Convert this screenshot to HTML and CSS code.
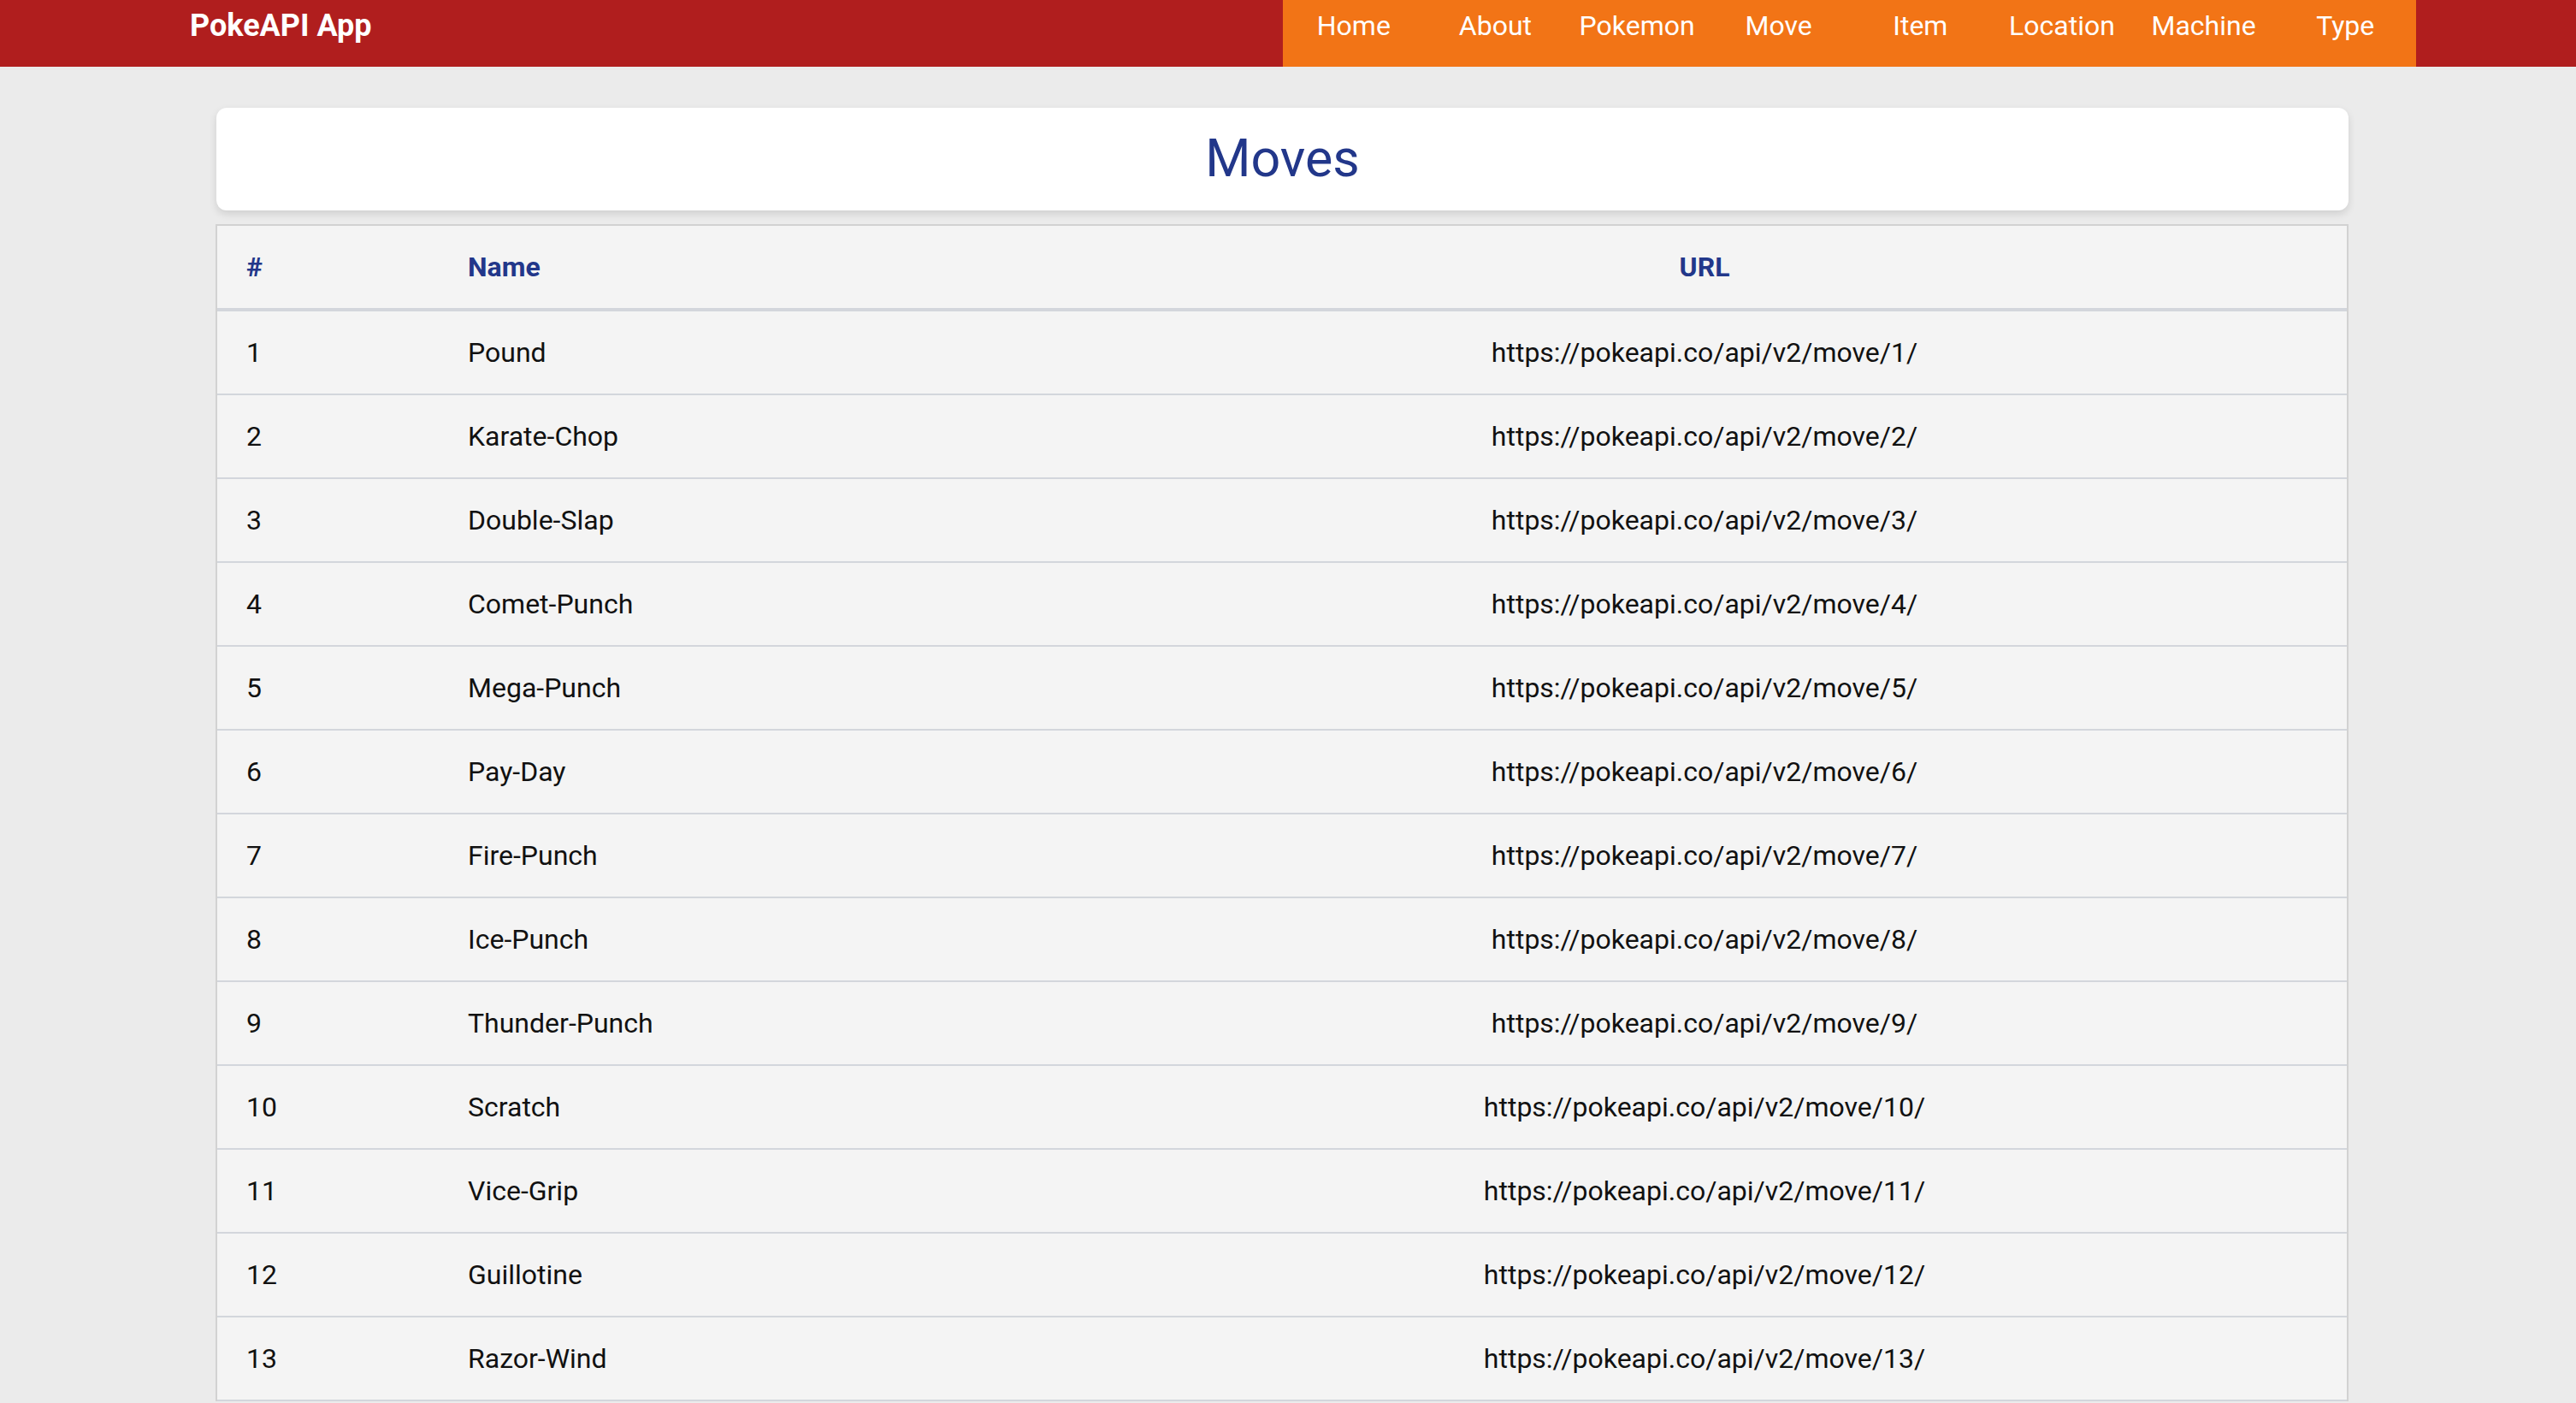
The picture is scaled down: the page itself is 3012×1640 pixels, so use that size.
FILE: index.html
```html
<!DOCTYPE html>
<html lang="en">
<head>
<meta charset="utf-8">
<title>PokeAPI App - Moves</title>
<link rel="stylesheet" href="styles.css">
</head>
<body>
<header class="topbar">
  <a class="brand" href="#">PokeAPI App</a>
  <nav class="nav">
    <a class="nav-link" href="#">Home</a>
    <a class="nav-link" href="#">About</a>
    <a class="nav-link" href="#">Pokemon</a>
    <a class="nav-link" href="#">Move</a>
    <a class="nav-link" href="#">Item</a>
    <a class="nav-link" href="#">Location</a>
    <a class="nav-link" href="#">Machine</a>
    <a class="nav-link" href="#">Type</a>
  </nav>
</header>
<main class="content">
  <section class="title-card">
    <h1 class="title">Moves</h1>
  </section>
  <table class="moves">
    <colgroup>
      <col class="col-num">
      <col class="col-name">
      <col class="col-url">
    </colgroup>
    <thead>
      <tr><th class="c-num">#</th><th class="c-name">Name</th><th class="c-url">URL</th></tr>
    </thead>
    <tbody>
      <tr><td>1</td><td>Pound</td><td class="c-url">https://pokeapi.co/api/v2/move/1/</td></tr>
      <tr><td>2</td><td>Karate-Chop</td><td class="c-url">https://pokeapi.co/api/v2/move/2/</td></tr>
      <tr><td>3</td><td>Double-Slap</td><td class="c-url">https://pokeapi.co/api/v2/move/3/</td></tr>
      <tr><td>4</td><td>Comet-Punch</td><td class="c-url">https://pokeapi.co/api/v2/move/4/</td></tr>
      <tr><td>5</td><td>Mega-Punch</td><td class="c-url">https://pokeapi.co/api/v2/move/5/</td></tr>
      <tr><td>6</td><td>Pay-Day</td><td class="c-url">https://pokeapi.co/api/v2/move/6/</td></tr>
      <tr><td>7</td><td>Fire-Punch</td><td class="c-url">https://pokeapi.co/api/v2/move/7/</td></tr>
      <tr><td>8</td><td>Ice-Punch</td><td class="c-url">https://pokeapi.co/api/v2/move/8/</td></tr>
      <tr><td>9</td><td>Thunder-Punch</td><td class="c-url">https://pokeapi.co/api/v2/move/9/</td></tr>
      <tr><td>10</td><td>Scratch</td><td class="c-url">https://pokeapi.co/api/v2/move/10/</td></tr>
      <tr><td>11</td><td>Vice-Grip</td><td class="c-url">https://pokeapi.co/api/v2/move/11/</td></tr>
      <tr><td>12</td><td>Guillotine</td><td class="c-url">https://pokeapi.co/api/v2/move/12/</td></tr>
      <tr><td>13</td><td>Razor-Wind</td><td class="c-url">https://pokeapi.co/api/v2/move/13/</td></tr>
    </tbody>
  </table>
</main>
</body>
</html>
```
FILE: styles.css
```css
html {
  scrollbar-width: none;
}
body {
  margin: 0;
  background: #ebebeb;
  font-family: Roboto, "Liberation Sans", sans-serif;
  color: #111;
}
.topbar {
  display: flex;
  align-items: stretch;
  height: 78px;
  background: #b01e1e;
  padding-left: 222px;
  padding-right: 187px;
}
.brand {
  flex: 1;
  padding-top: 9px;
  font-size: 36px;
  font-weight: 700;
  color: #fff;
  text-decoration: none;
}
.nav {
  display: grid;
  grid-template-columns: repeat(8, 1fr);
  width: 1325px;
  background: #f27416;
}
.nav-link {
  padding-top: 11px;
  text-align: center;
  font-size: 32px;
  color: #fff;
  text-decoration: none;
}
.content {
  width: 2494px;
  margin: 48px 0 0 252px;
  display: flex;
  flex-direction: column;
  gap: 16px;
}
.title-card {
  background: #fff;
  border-radius: 12px;
  box-shadow: 0 4px 10px rgba(0, 0, 0, 0.12);
  padding: 23px 0 25px;
  margin-left: 1px;
}
.title {
  margin: 0;
  text-align: center;
  font-size: 61px;
  line-height: 72px;
  font-weight: 400;
  color: #22378a;
}
.moves {
  width: 100%;
  table-layout: fixed;
  border-collapse: separate;
  border-spacing: 0;
  background: #f4f4f4;
  border: 2px solid #d2d2d2;
  border-bottom: none;
  font-size: 32px;
}
.col-num { width: 259px; }
.col-name { width: 729px; }
.moves th,
.moves td {
  padding: 29px 34px;
  line-height: 38px;
  text-align: left;
  vertical-align: middle;
}
.moves th {
  font-weight: 700;
  color: #22378a;
  border-bottom: 4px solid #d3d6dc;
}
.moves td {
  border-bottom: 2px solid #d3d6dc;
  color: #111;
}
.moves .c-url {
  text-align: center;
}
```
